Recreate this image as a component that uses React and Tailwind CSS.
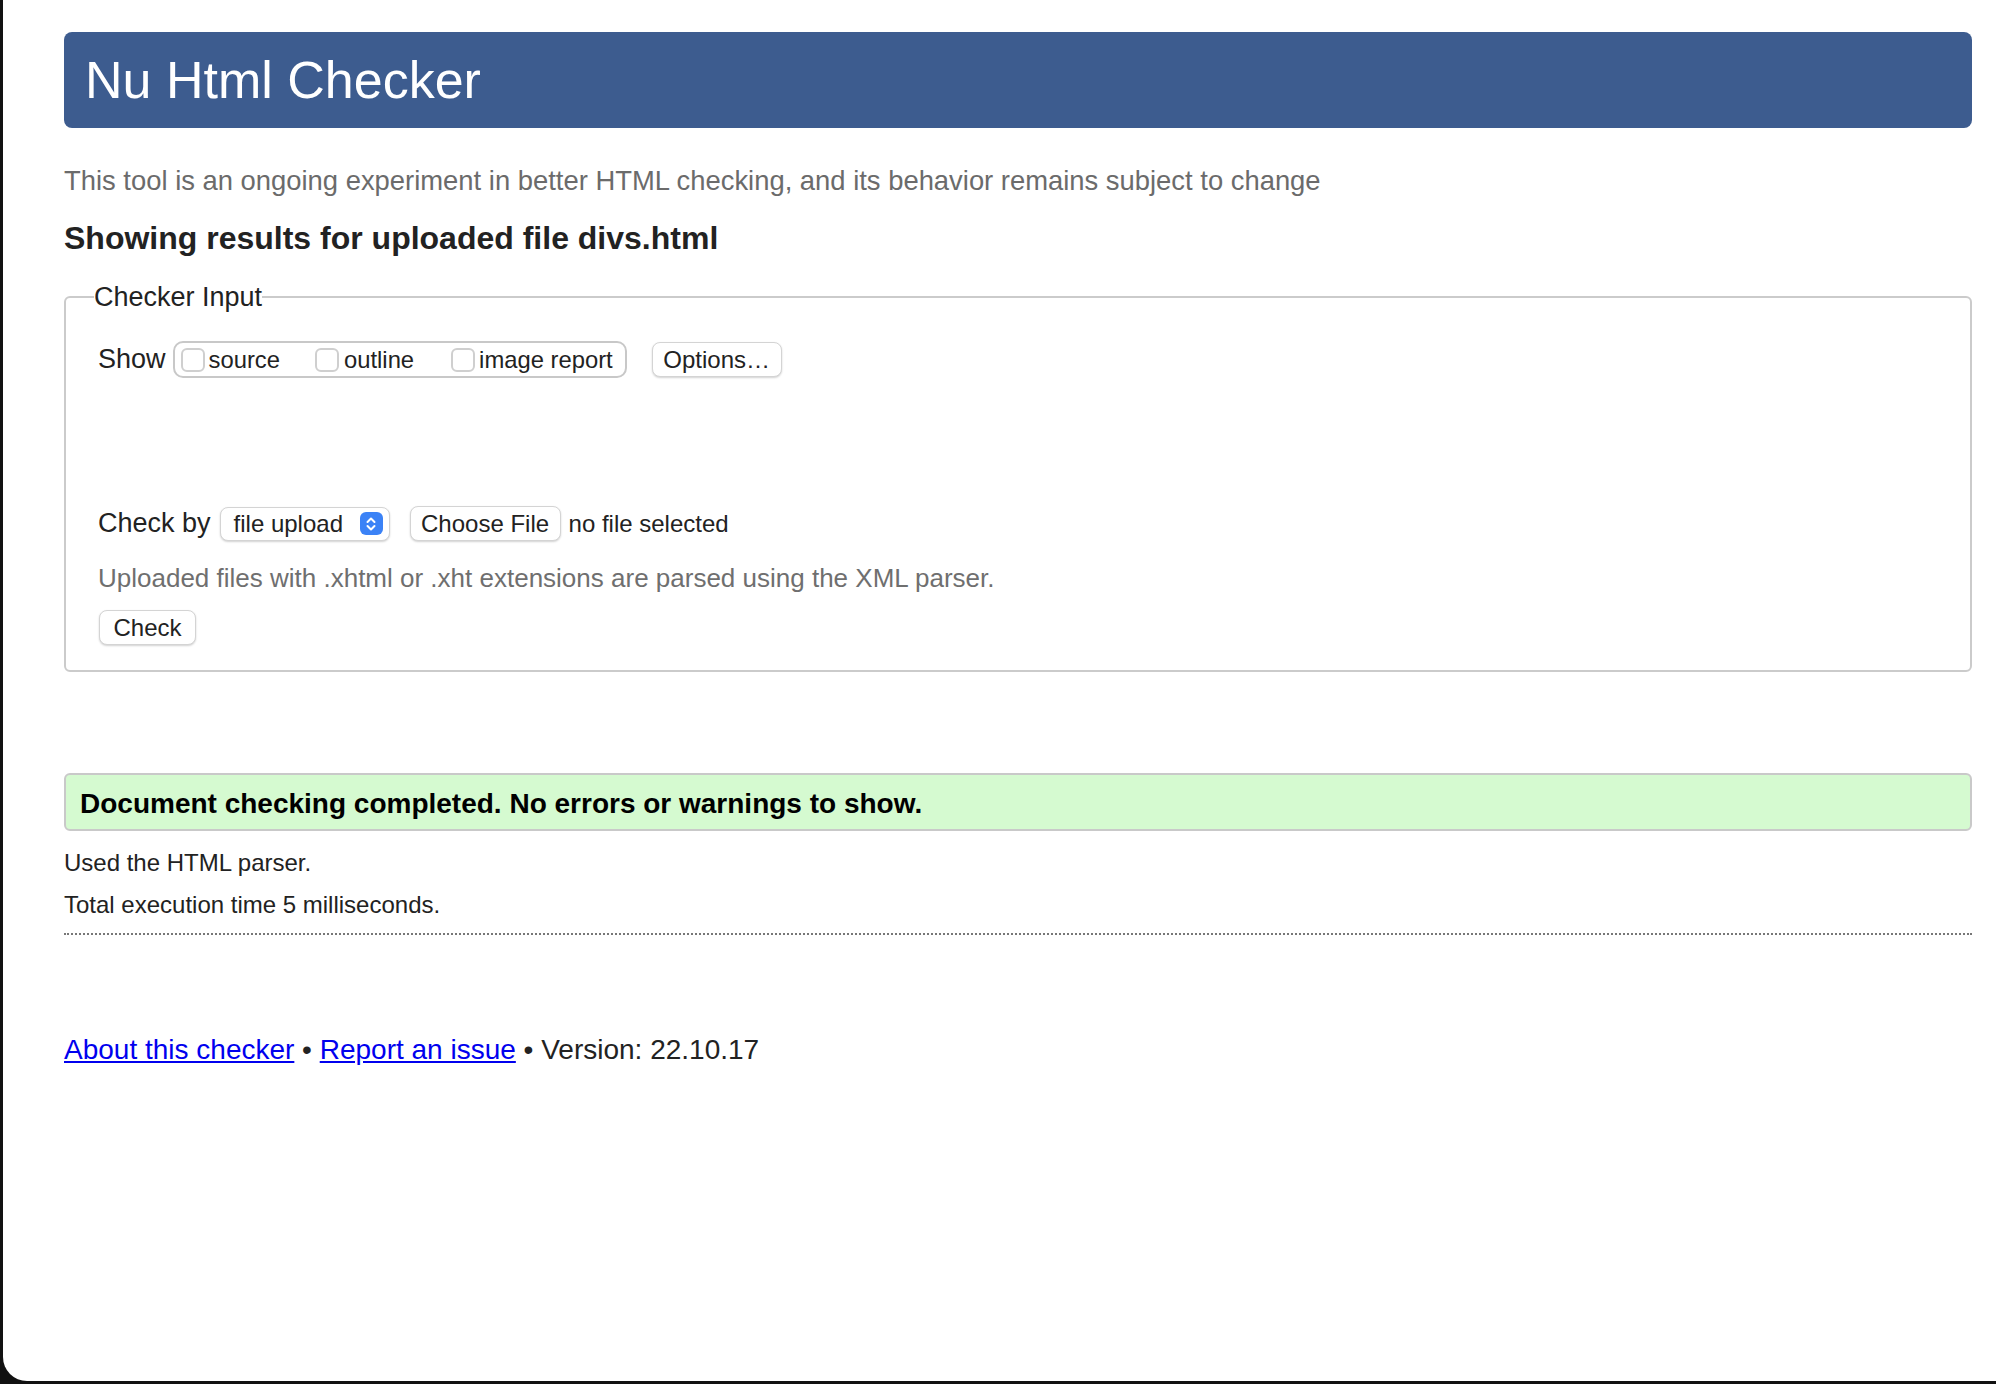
import React from 'react';

function Checkbox() {
  return <span className="inline-block w-[24px] h-[24px] rounded-[6px] border-2 border-[#cfcfcf] bg-white shrink-0" />;
}

function MacButton({ children, className = '' }) {
  return (
    <button
      type="button"
      className={`h-[35px] px-[10px] whitespace-nowrap bg-white rounded-[8px] border border-[#d4d4d4] shadow-[0_1px_2px_rgba(0,0,0,0.18)] text-[24px] leading-none text-[#222] ${className}`}
    >
      {children}
    </button>
  );
}

export default function App() {
  return (
    <div className="min-h-screen h-[1384px] bg-[#111] font-['Liberation_Sans',Arial,sans-serif]">
      <div className="h-[1381px] ml-[3px] bg-white rounded-bl-[24px] pt-[32px] pl-[61px] pr-[24px]">
        <header className="h-[96px] flex items-center pl-[21px] rounded-[8px] bg-[#3d5c8f]">
          <h1 className="text-[52px] leading-none text-white">Nu Html Checker</h1>
        </header>

        <p className="mt-[37px] text-[27.4px] leading-[32px] text-[#6b6b6b]">
          This tool is an ongoing experiment in better HTML checking, and its behavior remains subject to change
        </p>

        <h2 className="mt-[22px] text-[32px] leading-[38px] font-bold text-[#222]">
          Showing results for uploaded file divs.html
        </h2>

        <fieldset className="mt-[24px] border-2 border-[#cbcbcb] rounded-[6px] pl-[32px] pr-[32px] pb-[25px]">
          <legend className="-ml-[4px] px-0 text-[27px] leading-[32px] text-[#222]">Checker Input</legend>

          <div className="mt-[28px] h-[37px] flex items-center">
            <span className="text-[27px] text-[#222]">Show</span>
            <div className="ml-[7px] h-[37px] flex items-center rounded-[10px] border-2 border-[#c8c8c8] pl-[6px] pr-[12px] text-[23.8px] text-[#222]">
              <label className="flex items-center gap-[4px]">
                <Checkbox />
                source
              </label>
              <label className="flex items-center gap-[5px] ml-[35px]">
                <Checkbox />
                outline
              </label>
              <label className="flex items-center gap-[4px] ml-[37px]">
                <Checkbox />
                image report
              </label>
            </div>
            <MacButton className="ml-[25px] w-[130px] h-[34px]">Options…</MacButton>
          </div>

          <div className="mt-[128px] h-[35px] flex items-center">
            <span className="text-[27px] text-[#222]">Check by</span>
            <div className="ml-[9px] w-[170px] h-[34px] flex items-center justify-between bg-white rounded-[8px] border border-[#d4d4d4] shadow-[0_1px_2px_rgba(0,0,0,0.18)] pl-[13px] pr-[6px] text-[24px] text-[#222]">
              file upload
              <span className="w-[23px] h-[23px] rounded-[6px] bg-[#3b82f6] flex items-center justify-center">
                <svg width="12" height="16" viewBox="0 0 12 16" fill="none" stroke="white" strokeWidth="2" strokeLinecap="round" strokeLinejoin="round">
                  <path d="M2.5 6 L6 2.5 L9.5 6" />
                  <path d="M2.5 10 L6 13.5 L9.5 10" />
                </svg>
              </span>
            </div>
            <MacButton className="ml-[20px] w-[151px]">Choose File</MacButton>
            <span className="ml-[8px] text-[24px] text-[#222]">no file selected</span>
          </div>

          <p className="mt-[21px] text-[26px] leading-[32px] text-[#6f6f6f]">
            Uploaded files with .xhtml or .xht extensions are parsed using the XML parser.
          </p>

          <MacButton className="mt-[16px] ml-[1px] w-[97px]">Check</MacButton>
        </fieldset>

        <div className="mt-[101px] h-[58px] flex items-center pl-[14px] pt-[3px] rounded-[6px] border-2 border-[#c9c9c9] bg-[#d5fad0]">
          <p className="text-[28px] font-bold text-black">Document checking completed. No errors or warnings to show.</p>
        </div>

        <p className="mt-[16px] text-[24px] leading-[32px] text-[#222]">Used the HTML parser.</p>
        <p className="mt-[10px] text-[24px] leading-[32px] text-[#222]">Total execution time 5 milliseconds.</p>

        <div className="mt-[12px] border-t-2 border-dotted border-[#777]" />

        <p className="mt-[98px] text-[28px] leading-[34px] text-[#222]">
          <a href="#" className="text-[#0000ee] underline">About this checker</a>
          {' • '}
          <a href="#" className="text-[#0000ee] underline">Report an issue</a>
          {' • Version: 22.10.17'}
        </p>
      </div>
    </div>
  );
}
